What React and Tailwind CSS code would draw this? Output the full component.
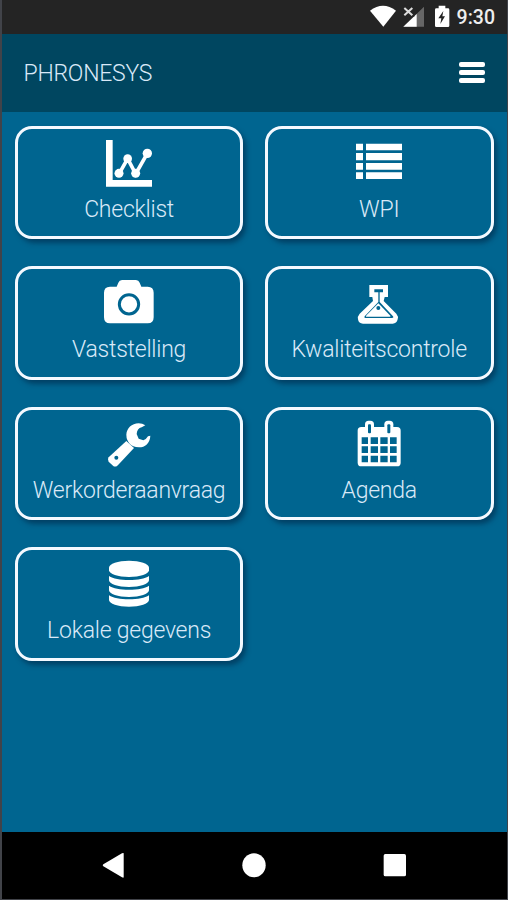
import React from "react";

const ChartIcon = () => (
  <svg className="h-[56px] w-[60px] shrink-0" viewBox="297 61 180 168" fill="white">
    <path d="M318 73h20v120h118v20H318z" />
    <path d="M358 173l25-44 24 46 35-62" fill="none" stroke="white" strokeWidth="11" />
    <circle cx="357" cy="173" r="13.5" />
    <circle cx="383" cy="129" r="13" />
    <circle cx="407" cy="173" r="13.5" />
    <circle cx="442" cy="113" r="14" />
  </svg>
);

const ListIcon = () => (
  <svg className="h-[56px] w-[60px] shrink-0" viewBox="285 61 180 168" fill="white">
    <path d="M306 84h21v20h-21zM336 84h108v20H336zM306 112h21v22h-21zM336 112h108v22H336zM306 142h21v20h-21zM336 142h108v20H336zM306 170h21v20h-21zM336 170h108v20H336z" />
  </svg>
);

const CameraIcon = () => (
  <svg className="h-[56px] w-[60px] shrink-0" viewBox="297 62 180 168" fill="white">
    <path d="M330 94h20l5-12q3-8 11-8h42q8 0 11 8l5 12h19q18 0 18 18v74q0 18-18 18H330q-18 0-18-18v-74q0-18 18-18z" />
    <circle cx="387" cy="147" r="29" stroke="#006590" strokeWidth="9" />
  </svg>
);

const FlaskIcon = () => (
  <svg className="h-[56px] w-[60px] shrink-0" viewBox="285 63 180 168" fill="white">
    <path d="M346 90h56v36h-10l-3 12 38 38q7 8 4 17-3 13-15 13h-89q-13 0-15-13-2-9 5-17l40-38-2-12h-9z" />
    <path d="M361 103h26v9h-10v29l40 43q3 5-3 5h-80q-5 0-2-5l41-43v-29h-12z" fill="#006590" />
    <path d="M373 145l36 37v3h-73v-3z" />
    <circle cx="373" cy="159" r="6" fill="#006590" />
  </svg>
);

const WrenchIcon = () => (
  <svg className="h-[56px] w-[60px] shrink-0" viewBox="297 65 180 168" fill="white">
    <path d="M436 90q-9-6-20-6c-21 0-36 15-37 34q0 9 3 16 6 14 18 19 7 3 17 3c18 0 33-12 34-35l-7 2q-5 9-14 12l-14-5-6-14q1-17 15-20z" />
    <path d="M379 137l23 21-50 53q-7 5-13 0l-13-12q-5-7 0-13z" />
    <circle cx="349" cy="187" r="6" fill="#006590" />
  </svg>
);

const CalendarIcon = () => (
  <svg className="h-[56px] w-[60px] shrink-0" viewBox="285 65 180 168">
    <rect x="311" y="95" width="129" height="118" rx="11" fill="white" />
    <rect x="333" y="76" width="27" height="42" rx="11" fill="white" />
    <rect x="391" y="76" width="27" height="42" rx="11" fill="white" />
    <rect x="342" y="87" width="9" height="27" rx="3" fill="#006590" />
    <rect x="400" y="87" width="9" height="27" rx="3" fill="#006590" />
    <path
      fill="#006590"
      d="M323 126h19v20h-19zM350 126h22v20h-22zM379 126h22v20h-22zM408 126h20v20h-20zM323 153h19v20h-19zM350 153h22v20h-22zM379 153h22v20h-22zM408 153h20v20h-20zM323 181h19v20h-19zM350 181h22v20h-22zM379 181h22v20h-22zM408 181h20v20h-20z"
    />
  </svg>
);

const DatabaseIcon = () => (
  <svg className="h-[56px] w-[60px] shrink-0" viewBox="297 66 180 168" fill="white">
    <path d="M327 98c0-12 27-21 60-21s60 9 60 21v8c0 11-27 20-60 20s-60-9-60-20z" />
    <path d="M327 123c12 8 34 12 60 12s48-4 60-12v13c0 11-27 20-60 20s-60-9-60-20z" />
    <path d="M327 152c12 8 34 12 60 12s48-4 60-12v14c0 11-27 20-60 20s-60-9-60-20z" />
    <path d="M327 181c12 8 34 12 60 12s48-4 60-12v14c0 11-27 20-60 20s-60-9-60-20z" />
  </svg>
);

const tiles = [
  { label: "Checklist", Icon: ChartIcon },
  { label: "WPI", Icon: ListIcon },
  { label: "Vaststelling", Icon: CameraIcon },
  { label: "Kwaliteitscontrole", Icon: FlaskIcon },
  { label: "Werkorderaanvraag", Icon: WrenchIcon },
  { label: "Agenda", Icon: CalendarIcon },
  { label: "Lokale gegevens", Icon: DatabaseIcon },
];

function Tile({ label, Icon }) {
  return (
    <button className="flex h-[113.5px] flex-col items-center rounded-[17px] border-[3px] border-[#f4f9ff] pt-[7px] shadow-[3px_4px_5px_rgba(0,30,60,0.5)]">
      <Icon />
      <span className="mt-1 text-[23px] leading-[27px] font-light tracking-[-0.24px] whitespace-nowrap text-[#d9e9f8]">
        {label}
      </span>
    </button>
  );
}

function StatusBar() {
  return (
    <div className="flex h-[33.5px] shrink-0 items-center justify-end bg-[#242424] pr-[12px]">
      <svg className="h-[33px] w-[84px]" viewBox="48 0 252 99" fill="white">
        <path d="M54 32q39-29 78 0L94 80z" />
        <path d="M216 20v60h-62z" fill="#666" />
        <path d="M194 42v38h-40z" />
        <path d="M150 17h37v33h-37z" fill="#242424" />
        <path d="M157 24l24 22M181 24l-24 22" stroke="#ddd" strokeWidth="6" fill="none" />
        <path d="M260 17h20v8h8q4 0 4 4v48q0 4-4 4h-35q-4 0-4-4V29q0-4 4-4h7z" />
        <path d="M274 33l-15 22h9l-3 17 14-23h-8z" fill="#242424" />
      </svg>
      <span className="ml-[5px] pt-px text-[19.5px] leading-[33px] font-medium text-[#eee]">9:30</span>
    </div>
  );
}

export default function App() {
  return (
    <div className="flex h-[900px] w-[508px] flex-col border-r border-b border-l-2 border-[#414349] bg-[#006590] font-['Roboto',sans-serif]">
      <StatusBar />
      <header className="flex h-[78px] shrink-0 items-center justify-between bg-[#004660] pr-[22px] pl-[21.5px]">
        <h1 className="pt-px text-[23px] leading-[27px] font-light tracking-[-0.25px] text-[#d9e9f8]">PHRONESYS</h1>
        <button className="flex w-[26px] flex-col gap-[3px]">
          <span className="h-[5px] rounded-[2px] bg-white" />
          <span className="h-[5px] rounded-[2px] bg-white" />
          <span className="h-[5px] rounded-[2px] bg-white" />
        </button>
      </header>
      <main className="grid flex-1 auto-rows-max grid-cols-2 content-start gap-x-[21.5px] gap-y-[27.1px] pt-[14px] pr-[13.5px] pl-[12.8px]">
        {tiles.map((tile) => (
          <Tile key={tile.label} {...tile} />
        ))}
      </main>
      <nav className="h-[67px] shrink-0 bg-black">
        <svg className="h-[67px] w-[505px]" viewBox="6 66 1515 201" fill="white">
          <path d="M371 130v72q-1 2-5 0l-56-33q-4-3 0-6l56-33q4-2 5 0z" />
          <ellipse cx="762" cy="166" rx="35" ry="36" />
          <rect x="1151" y="132" width="67" height="67" rx="5" />
        </svg>
      </nav>
    </div>
  );
}
